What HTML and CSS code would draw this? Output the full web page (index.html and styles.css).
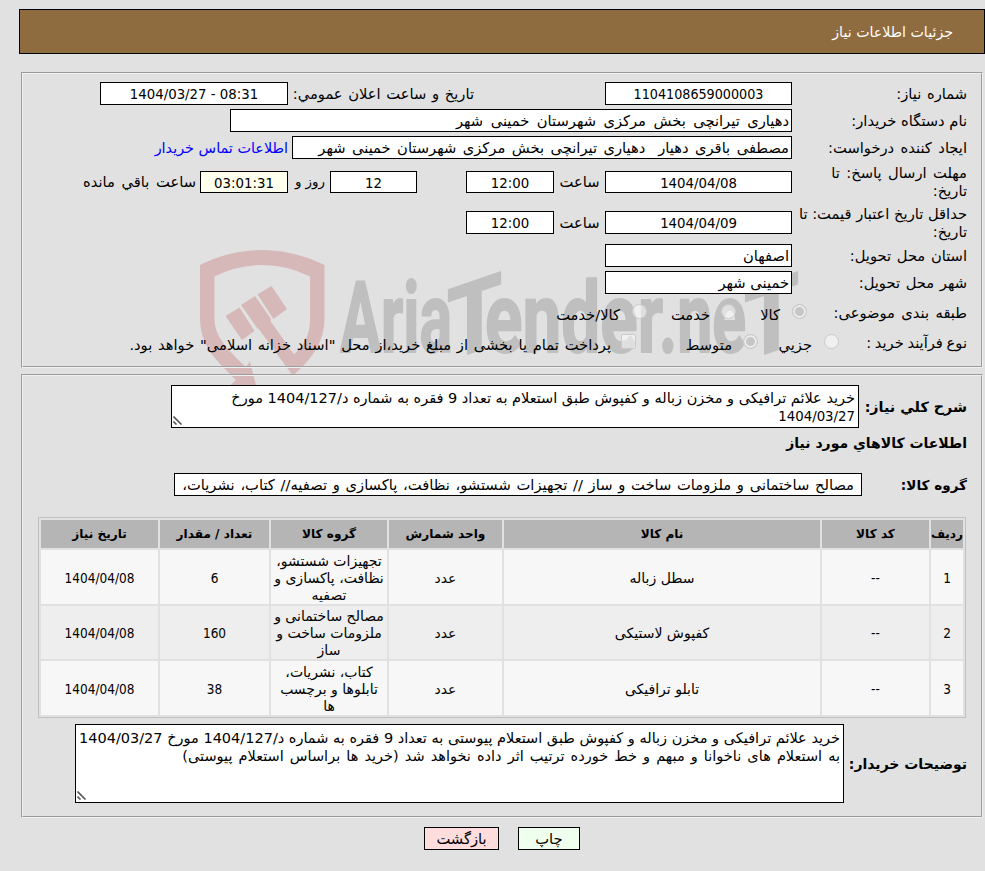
FILE: index.html
```
<!DOCTYPE html>
<html lang="fa" dir="rtl">
<head>
    <meta charset="UTF-8">
    <meta name="viewport" content="width=device-width, initial-scale=1.0">
    <title>جزئیات اطلاعات نیاز</title>
    <link rel="stylesheet" href="styles.css">
</head>
<body>
    <!-- logo behind the form -->
    <svg class="watermark" width="610" height="145" viewBox="195 245 610 145">
        <g class="shield">
            <path d="M200 265Q230 250 262 250Q294 250 324.500 265V318C324.500 343 311 360 292.700 375.600L258.700 329L257.500 328.500L241 305L255 296L271 319L270.500 321L294 354.500C305 344 310 334 310 320V276.500Q287 265 262 265Q237 265 214.500 276.500V320C215 338 230 352 246 367L250 361.500L256.500 387L230.500 385L236 380C218 362 200 347 200 318Z"/>
            <path d="M225.500 316L239.500 307.500L254.500 331L242 340Z"/>
            <path d="M257.500 294.500L271.500 286L287 309L273.500 319Z"/>
        </g>
        <g class="brand" direction="ltr">
            <text x="340" y="352" textLength="112" lengthAdjust="spacingAndGlyphs">Aria</text>
            <text transform="translate(447 361) skewY(-19)" x="0" y="0" textLength="55" lengthAdjust="spacingAndGlyphs">T</text>
            <text x="485" y="352" textLength="178" lengthAdjust="spacingAndGlyphs">ender</text>
            <text x="659" y="352" textLength="87" lengthAdjust="spacingAndGlyphs">.ne</text>
            <text transform="translate(744 361) skewY(-19)" x="0" y="0" textLength="55" lengthAdjust="spacingAndGlyphs">T</text>
        </g>
    </svg>

    <div class="header">جزئیات اطلاعات نیاز</div>

    <!-- need info -->
    <div class="panel info">
        <div class="row">
            <div class="label">شماره نیاز:</div>
            <div class="box num code date">1104108659000003</div>
            <div class="text announce">تاریخ و ساعت اعلان عمومي:</div>
            <div class="box num stamp" dir="ltr">1404/03/27 - 08:31</div>
        </div>
        <div class="row">
            <div class="label tight">نام دستگاه خریدار:</div>
            <div class="box buyer">دهیاری تیرانچی بخش مرکزی شهرستان خمینی شهر</div>
        </div>
        <div class="row">
            <div class="label loose">ایجاد کننده درخواست:</div>
            <div class="box creator">مصطفی باقری دهیار&nbsp; دهیاری تیرانچی بخش مرکزی شهرستان خمینی شهر</div>
            <a class="link">اطلاعات تماس خریدار</a>
        </div>
        <div class="row tall">
            <div class="label loose">مهلت ارسال پاسخ: تا<br>تاریخ:</div>
            <div class="box num date low">1404/04/08</div>
            <div class="text hour">ساعت</div>
            <div class="box num time low">12:00</div>
            <div class="box num days low">12</div>
            <div class="text and">روز و</div>
            <div class="box num time left low">03:01:31</div>
            <div class="text remain">ساعت باقي مانده</div>
        </div>
        <div class="row tall second">
            <div class="label tight">حداقل تاریخ اعتبار قیمت: تا<br>تاریخ:</div>
            <div class="box num date">1404/04/09</div>
            <div class="text hour">ساعت</div>
            <div class="box num time">12:00</div>
        </div>
        <div class="row">
            <div class="label">استان محل تحویل:</div>
            <div class="box date">اصفهان</div>
        </div>
        <div class="row">
            <div class="label">شهر محل تحویل:</div>
            <div class="box date">خمینی شهر</div>
        </div>
        <div class="options">
            <div class="row option">
                <div class="label kind">طبقه بندی موضوعی:</div>
                <span class="radio on"></span><div class="text goods">کالا</div>
                <span class="radio"></span><div class="text service">خدمت</div>
                <span class="radio"></span><div class="text both">کالا/خدمت</div>
            </div>
            <div class="row option">
                <div class="label process">نوع فرآیند خرید :</div>
                <span class="radio"></span><div class="text small">جزیي</div>
                <span class="radio on"></span><div class="text medium">متوسط</div>
                <span class="check"></span><div class="text payment">پرداخت تمام یا بخشی از مبلغ خرید،از محل "اسناد خزانه اسلامی" خواهد بود.</div>
            </div>
        </div>
    </div>

    <!-- goods -->
    <div class="panel goods-info">
        <div class="line summary">
            <b class="title">شرح کلي نیاز:</b>
            <div class="area">
                <div>خرید علائم ترافیکی و مخزن زباله و کفپوش طبق استعلام به تعداد 9 فقره به شماره د/1404/127 مورخ</div>
                <div class="num">1404/03/27</div>
                <svg class="grip" width="10" height="9"><path d="M0.500 0.500L8.500 8.500M0.500 5.500L3.500 8.500"/></svg>
            </div>
        </div>
        <b class="title heading">اطلاعات کالاهاي مورد نیاز</b>
        <div class="line group">
            <b class="title">گروه کالا:</b>
            <div class="box">مصالح ساختمانی و ملزومات ساخت و ساز // تجهیزات شستشو، نظافت، پاکسازی و تصفیه// کتاب، نشریات،</div>
        </div>

        <table class="grid">
            <colgroup>
                <col class="c1"><col class="c2"><col class="c3"><col class="c4"><col class="c5"><col class="c6"><col class="c7">
            </colgroup>
            <tr>
                <th>ردیف</th>
                <th>کد کالا</th>
                <th>نام کالا</th>
                <th>واحد شمارش</th>
                <th>گروه کالا</th>
                <th>تعداد / مقدار</th>
                <th>تاریخ نیاز</th>
            </tr>
            <tr>
                <td class="n">1</td>
                <td class="n">--</td>
                <td>سطل زباله</td>
                <td>عدد</td>
                <td>تجهیزات شستشو،<br>نظافت، پاکسازی و<br>تصفیه</td>
                <td class="n">6</td>
                <td class="n">1404/04/08</td>
            </tr>
            <tr class="alt">
                <td class="n">2</td>
                <td class="n">--</td>
                <td>کفپوش لاستیکی</td>
                <td>عدد</td>
                <td>مصالح ساختمانی و<br>ملزومات ساخت و<br>ساز</td>
                <td class="n">160</td>
                <td class="n">1404/04/08</td>
            </tr>
            <tr>
                <td class="n">3</td>
                <td class="n">--</td>
                <td>تابلو ترافیکی</td>
                <td>عدد</td>
                <td>کتاب، نشریات،<br>تابلوها و برچسب<br>ها</td>
                <td class="n">38</td>
                <td class="n">1404/04/08</td>
            </tr>
        </table>

        <div class="line notes">
            <b class="title">توضیحات خریدار:</b>
            <div class="area">
                <div>خرید علائم ترافیکی و مخزن زباله و کفپوش طبق استعلام پیوستی به تعداد 9 فقره به شماره د/1404/127 مورخ 1404/03/27</div>
                <div class="wide">به استعلام های ناخوانا و مبهم و خط خورده ترتیب اثر داده نخواهد شد (خرید ها براساس استعلام پیوستی)</div>
                <svg class="grip" width="10" height="9"><path d="M0.500 0.500L8.500 8.500M0.500 5.500L3.500 8.500"/></svg>
            </div>
        </div>
    </div>

    <div class="buttons">
        <button class="print">چاپ</button>
        <button class="back">بازگشت</button>
    </div>
</body>
</html>
```
FILE: styles.css
```
/* page */
* {
    box-sizing: border-box;
}
body {
    margin: 0;
    padding: 9px 0 0 0;
    height: 871px;
    overflow: hidden;
    background-color: #e1e1e1;
    color: #000;
    font-family: "DejaVu Sans", sans-serif;
    font-size: 14.7px;
    white-space: nowrap;
}
.watermark {
    position: absolute;
    left: 195px;
    top: 245px;
    z-index: -1;
}
.shield {
    fill: #d6b8b9;
}
.brand {
    fill: #bfbfbf;
    stroke: #bfbfbf;
    stroke-width: 2px;
    stroke-linejoin: round;
    font: bold 99px Roboto, sans-serif;
}
.header {
    height: 45px;
    margin-left: 19px;
    padding-right: 31px;
    border: 1px solid #000;
    background-color: #8f6c40;
    color: #fff;
    font-size: 14.2px;
    line-height: 44px;
}

/* panels */
.panel {
    margin: 0 2px 0 21px;
    border: 2px groove #f0f0f0;
    padding-right: 14px;
}
.info {
    margin-top: 18px;
    height: 296px;
    padding-top: 6px;
}
.goods-info {
    margin-top: 6px;
    height: 444px;
    padding-top: 9px;
}
.row {
    display: flex;
    align-items: center;
    height: 27px;
}
.tall {
    height: 41px;
}
.second {
    height: 40px;
}
.second .label {
    padding-top: 2px;
}
.options {
    padding-top: 2px;
}
.option {
    height: 30px;
}
.label {
    width: 175px;
    line-height: 18px;
    word-spacing: 1px;
}
.tight {
    word-spacing: 0;
}
.loose {
    word-spacing: 1.8px;
}
.process {
    width: 128px;
    word-spacing: -1px;
}
.kind {
    width: 160px;
    word-spacing: 1.8px;
}
.box {
    height: 23px;
    padding: 0 2px;
    border: 1px solid #000;
    background-color: #fff;
    line-height: 21px;
    overflow: hidden;
}
.low {
    height: 22px;
}
.num {
    font-family: "DejaVu Sans Condensed", sans-serif;
    font-size: 14.8px;
    text-align: center;
}
.code {
    font-size: 14.2px;
    line-height: 22px;
}
.date {
    width: 187px;
}
.stamp {
    width: 188px;
}
.time {
    width: 88px;
}
.days {
    width: 87px;
    margin-right: 49px;
}
.left {
    background-color: #ffffee;
}
.buyer {
    width: 562px;
    word-spacing: 2.8px;
}
.creator {
    width: 500px;
    word-spacing: 1.8px;
}
.link {
    margin-right: 4px;
    color: #0000ff;
    font-size: 14.4px;
}
.announce {
    width: 181px;
    margin-right: 131px;
    margin-left: 5px;
    word-spacing: 1px;
}
.hour {
    width: 51px;
    text-align: center;
}
.and {
    width: 42px;
    padding-right: 5px;
    font-size: 13.4px;
}
.remain {
    margin-right: 4px;
    word-spacing: 2px;
}

/* disabled options */
.radio {
    width: 15px;
    height: 15px;
    margin-bottom: 3px;
    border: 1px solid #cacaca;
    border-radius: 50%;
    background-color: rgba(255, 255, 255, 0.5);
}
.on {
    background-color: #c6c6c6;
    box-shadow: inset 0 0 0 2px #ececec;
}
.check {
    width: 15px;
    height: 15px;
    margin-bottom: 3px;
    border: 1px solid #cacaca;
    border-radius: 2px;
    background-color: rgba(255, 255, 255, 0.5);
}
.option .text {
    padding-top: 3px;
}
.goods {
    width: 56px;
    padding-right: 12px;
}
.service {
    width: 74px;
    padding-right: 11px;
}
.both {
    padding-right: 12px;
}
.small {
    width: 66px;
    padding-right: 12px;
}
.medium {
    width: 107px;
    padding-right: 11px;
}
.payment {
    padding-right: 10px;
    word-spacing: 1.1px;
}

/* goods */
.title {
    font-size: 14px;
}
.line {
    display: flex;
    align-items: center;
}
.area {
    position: relative;
    border: 1px solid #000;
    background-color: #fff;
    padding: 3px 3px;
    font-size: 14.5px;
    line-height: 18px;
}
.area .num {
    text-align: right;
}
.wide {
    word-spacing: 1.5px;
}
.grip {
    position: absolute;
    left: 1px;
    bottom: 2px;
    fill: none;
    stroke: #555;
    stroke-width: 1.6px;
}
.summary .title {
    width: 108px;
    font-size: 14.3px;
}
.summary .area {
    width: 688px;
    height: 43px;
}
.heading {
    display: block;
    height: 32px;
    line-height: 30px;
}
.group {
    margin-top: 13px;
}
.group .title {
    width: 105px;
    font-size: 13.6px;
}
.group .box {
    width: 688px;
    padding-right: 7px;
    word-spacing: 1.05px;
}
.grid {
    table-layout: fixed;
    width: 928px;
    height: 201px;
    margin-top: 21px;
    margin-right: 1px;
    border: 1px solid #c0c0c0;
    border-collapse: separate;
    border-spacing: 2px;
}
.c1 { width: 32px; }
.c2 { width: 107px; }
.c3 { width: 316px; }
.c4 { width: 113px; }
.c5 { width: 116px; }
.c6 { width: 109px; }
.c7 { width: 117px; }
.grid th {
    height: 28px;
    padding: 0;
    background-color: #b5b5b5;
    font-size: 12.1px;
    line-height: 17px;
}
.grid td {
    height: 54px;
    padding: 2px 0 0 0;
    background-color: #f7f7f7;
    font-size: 14px;
    line-height: 17px;
    text-align: center;
}
.grid .alt td {
    height: 53px;
    background-color: #eee;
}
.grid .n {
    font-family: "DejaVu Sans Condensed", sans-serif;
    font-size: 13.5px;
}
.notes {
    margin-top: 6px;
}
.notes .title {
    width: 123px;
}
.notes .area {
    width: 769px;
    height: 79px;
    padding-top: 4px;
}

/* buttons */
.buttons {
    display: flex;
    gap: 19px;
    margin-top: 9px;
    padding-right: 405px;
}
.buttons button {
    height: 23px;
    padding: 0;
    border: 1px solid #000;
    font-family: "DejaVu Sans", sans-serif;
    font-size: 14.7px;
    line-height: 20px;
}
.print {
    width: 62px;
    background-color: #eeffee;
}
.back {
    width: 75px;
    background-color: #ffdddd;
}
```
